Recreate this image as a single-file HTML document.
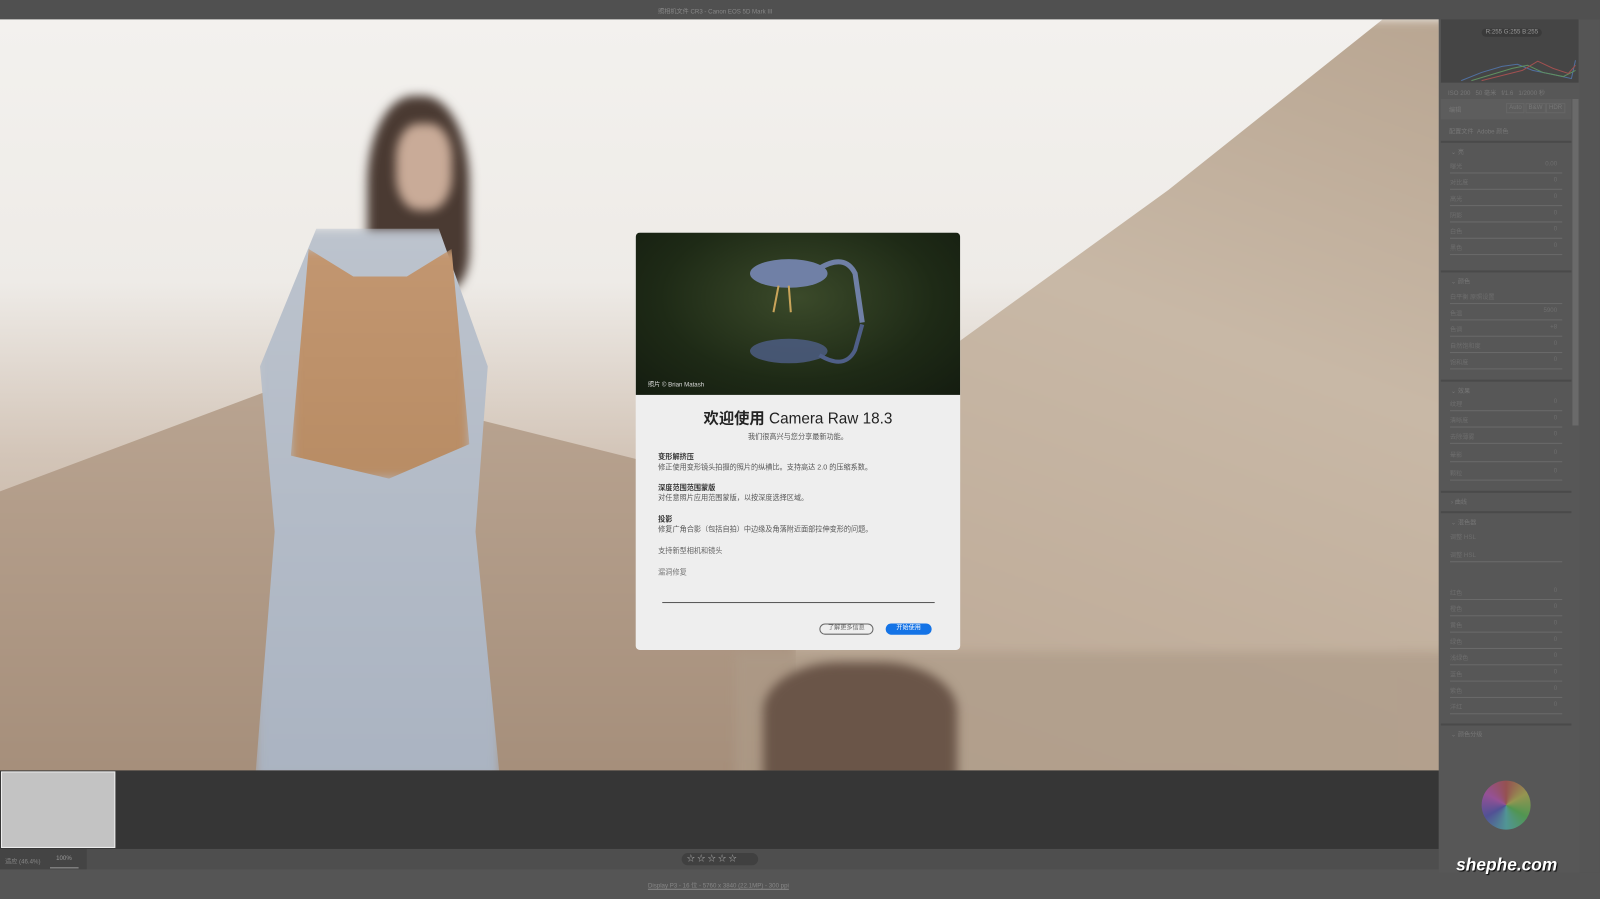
<!DOCTYPE html>
<html><head><meta charset="utf-8"><style>
*{margin:0;padding:0;box-sizing:border-box}
body{width:1600px;height:899px;background:#555;font-family:"Liberation Sans","Noto Sans CJK SC",sans-serif;position:relative;overflow:hidden}
#w{position:absolute;left:0;top:0;width:1568px;height:881px;transform:scale(1.0204);transform-origin:0 0}
.a{position:absolute}
.t{color:#8a8a8a;font-size:6px}
.row{position:absolute;left:1421px;width:110px;height:16px;color:#6e6e6e;font-size:6px}
.row i{position:absolute;left:0;right:0;top:11px;height:1px;background:#6a6a6a}
.row b{position:absolute;right:5px;top:0;font-weight:normal}
.hd{position:absolute;left:1412px;width:128px;height:18px;border-top:2px solid #4a4a4a;color:#777;font-size:6px;padding:4px 10px}
.ph{filter:blur(5px)}
</style></head><body><div id="w">
<div class="a" style="left:0;top:0;width:1568px;height:19px;background:#505050"></div>
<div class="a t" style="left:645px;top:6px;color:#888">照相机文件 CR3 - Canon EOS 5D Mark III</div>
<div class="a" style="left:0;top:19px;width:1410px;height:736px;overflow:hidden;background:linear-gradient(180deg,#f3f1ee 0%,#eeebe7 35%,#d3c5b8 58%,#b09a86 100%)">
 <div class="a ph" style="left:760px;top:0;width:700px;height:760px;background:linear-gradient(200deg,#b8a591 0%,#c8b8a6 40%,#bba794 100%);clip-path:polygon(25% 42%,55% 22%,85% 0,100% 0,100% 100%,0 100%,5% 60%)"></div>
 <div class="a ph" style="left:-20px;top:350px;width:800px;height:400px;background:linear-gradient(180deg,#b9a491,#a58e7a);clip-path:polygon(0 30%,40% 0,100% 30%,100% 100%,0 100%)"></div>
 <div class="a ph" style="left:720px;top:620px;width:720px;height:130px;background:#ad9b88;opacity:.7"></div>
 <div class="a ph" style="left:748px;top:630px;width:190px;height:120px;background:#6a5548;border-radius:40% 40% 0 0"></div>
 <div class="a ph" style="left:360px;top:75px;width:100px;height:190px;background:#4a3a32;border-radius:45% 45% 20% 20%"></div>
 <div class="a ph" style="left:388px;top:102px;width:55px;height:85px;background:#c9ab98;border-radius:40%"></div>
 <div class="a ph" style="left:250px;top:205px;width:240px;height:540px;background:linear-gradient(180deg,#bcc3cd,#aab3c1);clip-path:polygon(25% 0,75% 0,95% 25%,90% 55%,100% 100%,0 100%,8% 55%,2% 25%)"></div>
 <div class="a ph" style="left:285px;top:225px;width:175px;height:225px;background:linear-gradient(180deg,#c29670,#b88c64);clip-path:polygon(10% 0,35% 12%,65% 12%,90% 0,100% 85%,55% 100%,0 90%)"></div>
</div>
<div class="a" style="left:0;top:755px;width:1410px;height:77px;background:#363636"></div>
<div class="a" style="left:1px;top:756px;width:112px;height:75px;background:#c3c3c3;border:1px solid #eee"></div>
<div class="a" style="left:0;top:832px;width:1410px;height:20px;background:#4e4e4e"></div>
<div class="a" style="left:0;top:832px;width:85px;height:20px;background:#444"></div>
<div class="a t" style="left:5px;top:839px;color:#888">适应 (46.4%)</div>
<div class="a t" style="left:55px;top:839px;color:#999">100%</div>
<div class="a" style="left:49px;top:850px;width:28px;height:1px;background:#999"></div>
<div class="a" style="left:668px;top:836px;width:75px;height:12px;background:#404040;border-radius:6px;color:#aaa;font-size:8px;padding-left:5px;line-height:12px">☆ ☆ ☆ ☆ ☆</div>
<div class="a t" style="left:635px;top:863px;color:#888;text-decoration:underline">Display P3 - 16 位 - 5760 x 3840 (22.1MP) - 300 ppi</div>
<div class="a" style="left:1410px;top:19px;width:138px;height:836px;background:#575757"></div>
<div class="a" style="left:1412px;top:19px;width:135px;height:62px;background:#454545"></div>
<svg class="a" style="left:1412px;top:19px" width="135" height="62"><polyline fill="none" stroke="#5070a0" points="20,60 40,52 60,46 75,44 90,50 110,54 128,58 132,40"/><polyline fill="none" stroke="#609060" points="30,60 50,54 70,48 85,45 100,52 120,56 132,50"/><polyline fill="none" stroke="#a05050" points="40,60 60,55 80,50 95,41 110,48 125,53 132,45"/></svg>
<div class="a t" style="left:1452px;top:28px;color:#999;background:#3a3a3a;padding:1px 4px;border-radius:5px">R:255 G:255 B:255</div>
<div class="a t" style="left:1419px;top:86px;color:#777">ISO 200 &nbsp; 50 毫米 &nbsp; f/1.6 &nbsp; 1/2000 秒</div>
<div class="a" style="left:1412px;top:97px;width:128px;height:20px;background:#5d5d5d"></div>
<div class="a t" style="left:1420px;top:103px;color:#777">编辑</div>
<div class="a t" style="left:1476px;top:101px;color:#777;border:1px solid #666;padding:1px 2px">Auto</div>
<div class="a t" style="left:1495px;top:101px;color:#777;border:1px solid #666;padding:1px 2px">B&amp;W</div>
<div class="a t" style="left:1515px;top:101px;color:#777;border:1px solid #666;padding:1px 2px">HDR</div>
<div class="a t" style="left:1420px;top:124px;color:#777">配置文件 &nbsp;Adobe 颜色</div>
<div class="hd" style="top:138px">⌄ 亮</div>
<div class="row" style="top:158px">曝光<b>0.00</b><i></i></div>
<div class="row" style="top:174px">对比度<b>0</b><i></i></div>
<div class="row" style="top:190px">高光<b>0</b><i></i></div>
<div class="row" style="top:206px">阴影<b>0</b><i></i></div>
<div class="row" style="top:222px">白色<b>0</b><i></i></div>
<div class="row" style="top:238px">黑色<b>0</b><i></i></div>
<div class="hd" style="top:265px">⌄ 颜色</div>
<div class="row" style="top:286px">白平衡 原照设置<i></i></div>
<div class="row" style="top:302px">色温<b>5900</b><i></i></div>
<div class="row" style="top:318px">色调<b>+8</b><i></i></div>
<div class="row" style="top:334px">自然饱和度<b>0</b><i></i></div>
<div class="row" style="top:350px">饱和度<b>0</b><i></i></div>
<div class="hd" style="top:372px">⌄ 效果</div>
<div class="row" style="top:391px">纹理<b>0</b><i></i></div>
<div class="row" style="top:407px">清晰度<b>0</b><i></i></div>
<div class="row" style="top:423px">去除薄雾<b>0</b><i></i></div>
<div class="row" style="top:441px">晕影<b>0</b><i></i></div>
<div class="row" style="top:459px">颗粒<b>0</b><i></i></div>
<div class="hd" style="top:481px">› 曲线</div>
<div class="hd" style="top:501px">⌄ 混色器</div>
<div class="row" style="top:521px">调整 HSL</div>
<div class="row" style="top:539px">调整 HSL<i></i></div>
<div class="row" style="top:576px">红色<b>0</b><i></i></div>
<div class="row" style="top:592px">橙色<b>0</b><i></i></div>
<div class="row" style="top:608px">黄色<b>0</b><i></i></div>
<div class="row" style="top:624px">绿色<b>0</b><i></i></div>
<div class="row" style="top:640px">浅绿色<b>0</b><i></i></div>
<div class="row" style="top:656px">蓝色<b>0</b><i></i></div>
<div class="row" style="top:672px">紫色<b>0</b><i></i></div>
<div class="row" style="top:688px">洋红<b>0</b><i></i></div>
<div class="hd" style="top:709px">⌄ 颜色分级</div>
<div class="a" style="left:1452px;top:765px;width:48px;height:48px;border-radius:50%;background:conic-gradient(#a05050,#a0a050,#50a050,#50a0a0,#5050a0,#a050a0,#a05050);opacity:.85"></div>
<div class="a" style="left:1541px;top:97px;width:6px;height:320px;background:#6a6a6a"></div>
<div class="a" style="left:1548px;top:19px;width:20px;height:836px;background:#555"></div>
<div class="a" style="left:1427px;top:838px;font:italic bold 17px 'Liberation Sans',sans-serif;color:#fff;text-shadow:1px 1px 1px #000">shephe.com</div>
<div class="a" style="left:623px;top:228px;width:318px;height:409px;background:#eeeeee;border-radius:4px;overflow:hidden">
 <div style="height:159px;background:radial-gradient(ellipse at 50% 40%,#3b4a2a,#1e2a16 60%,#141c10)">
  <svg width="318" height="159"><ellipse cx="150" cy="40" rx="38" ry="14" fill="#7080a6"/><path d="M180 35 Q205 20 215 40 L222 88" stroke="#7080a6" stroke-width="5" fill="none"/><line x1="140" y1="52" x2="135" y2="78" stroke="#c9a45a" stroke-width="2"/><line x1="150" y1="52" x2="152" y2="78" stroke="#c9a45a" stroke-width="2"/><ellipse cx="150" cy="116" rx="38" ry="12" fill="#4f5f88" opacity=".8"/><path d="M180 120 Q205 135 215 115 L222 90" stroke="#4f5f88" stroke-width="4" fill="none"/></svg>
 </div>
 <div class="a" style="left:12px;top:144px;color:#ddd;font-size:6px">照片 © Brian Matash</div>
 <div class="a" style="left:0;top:171px;width:318px;text-align:center;font-size:15px;color:#222"><b>欢迎使用</b> Camera Raw 18.3</div>
 <div class="a" style="left:0;top:195px;width:318px;text-align:center;font-size:7px;color:#555">我们很高兴与您分享最新功能。</div>
 <div class="a" style="left:22px;top:216px;font-size:7px;color:#333;line-height:10px"><b>变形解挤压</b><br><span style="color:#555">修正使用变形镜头拍摄的照片的纵横比。支持高达 2.0 的压缩系数。</span></div>
 <div class="a" style="left:22px;top:246px;font-size:7px;color:#333;line-height:10px"><b>深度范围范围蒙版</b><br><span style="color:#555">对任意照片应用范围蒙版，以按深度选择区域。</span></div>
 <div class="a" style="left:22px;top:277px;font-size:7px;color:#333;line-height:10px"><b>投影</b><br><span style="color:#555">修复广角合影（包括自拍）中边缘及角落附近面部拉伸变形的问题。</span></div>
 <div class="a" style="left:22px;top:307px;font-size:7px;color:#666">支持新型相机和镜头</div>
 <div class="a" style="left:22px;top:328px;font-size:7px;color:#777">漏洞修复</div>
 <div class="a" style="left:26px;top:362px;width:267px;height:1px;background:#555"></div>
 <div class="a" style="left:180px;top:383px;width:53px;height:11px;border:1px solid #666;border-radius:6px;font-size:6px;color:#666;text-align:center;line-height:9px">了解更多信息</div>
 <div class="a" style="left:245px;top:383px;width:45px;height:11px;background:#1473e6;border-radius:6px;font-size:6px;color:#fff;text-align:center;line-height:11px">开始使用</div>
</div>
</div></body></html>
